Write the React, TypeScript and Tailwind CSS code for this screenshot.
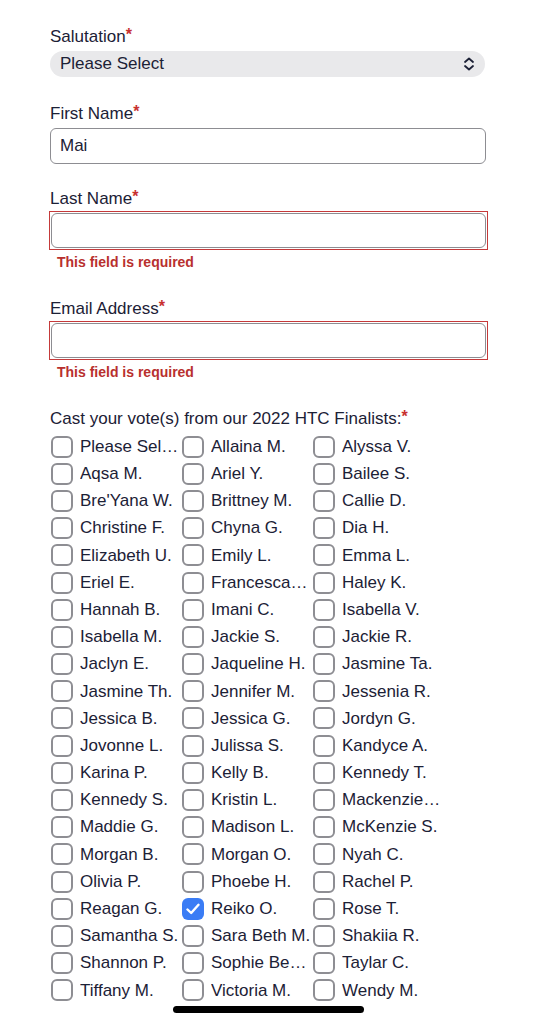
import React from 'react'

const names = [
  'Please Select', 'Allaina M.', 'Alyssa V.',
  'Aqsa M.', 'Ariel Y.', 'Bailee S.',
  "Bre'Yana W.", 'Brittney M.', 'Callie D.',
  'Christine F.', 'Chyna G.', 'Dia H.',
  'Elizabeth U.', 'Emily L.', 'Emma L.',
  'Eriel E.', 'Francesca M.', 'Haley K.',
  'Hannah B.', 'Imani C.', 'Isabella V.',
  'Isabella M.', 'Jackie S.', 'Jackie R.',
  'Jaclyn E.', 'Jaqueline H.', 'Jasmine Ta.',
  'Jasmine Th.', 'Jennifer M.', 'Jessenia R.',
  'Jessica B.', 'Jessica G.', 'Jordyn G.',
  'Jovonne L.', 'Julissa S.', 'Kandyce A.',
  'Karina P.', 'Kelly B.', 'Kennedy T.',
  'Kennedy S.', 'Kristin L.', 'Mackenzie M.',
  'Maddie G.', 'Madison L.', 'McKenzie S.',
  'Morgan B.', 'Morgan O.', 'Nyah C.',
  'Olivia P.', 'Phoebe H.', 'Rachel P.',
  'Reagan G.', 'Reiko O.', 'Rose T.',
  'Samantha S.', 'Sara Beth M.', 'Shakiia R.',
  'Shannon P.', 'Sophie Bennett', 'Taylar C.',
  'Tiffany M.', 'Victoria M.', 'Wendy M.',
]

function Label({ text, className = '' }: { text: string; className?: string }) {
  return (
    <div className={`h-5 leading-5 text-[17px] text-[#1c2136] ${className}`}>
      {text}
      <span className="text-[#c8312f] text-[16px] font-bold relative -top-[2px]">*</span>
    </div>
  )
}

function ErrorInput() {
  return (
    <>
      <div className="mt-[2px] border border-[#c53a3a] p-px">
        <div className="h-[35px] rounded-[6px] border-[1.5px] border-[#8d8d92] bg-white" />
      </div>
      <div className="mt-[4px] pl-2 h-4 leading-4 text-[14px] font-bold text-[#b8302e]">
        This field is required
      </div>
    </>
  )
}

function Checkbox({ checked }: { checked: boolean }) {
  if (checked) {
    return (
      <div className="w-[22px] h-[22px] rounded-[6px] bg-[#3a7cf5] flex items-center justify-center shrink-0">
        <svg width="14" height="12" viewBox="0 0 14 12" fill="none">
          <path d="M1.5 6.5 L5.2 10 L12.5 1.8" stroke="white" strokeWidth="2.4" strokeLinecap="round" strokeLinejoin="round" />
        </svg>
      </div>
    )
  }
  return <div className="w-[22px] h-[22px] rounded-[6px] border-2 border-[#8e8e93] bg-white shrink-0" />
}

export default function App() {
  return (
    <div
      className="relative min-h-[1024px] bg-white pl-[50px] pr-[50px] pt-[27px]"
      style={{ fontFamily: '"Liberation Sans", Arial, sans-serif' }}
    >
      <Label text="Salutation" />
      <div className="mt-[4px] h-[26px] w-[435px] rounded-full bg-[#e9e9eb] flex items-center justify-between pl-[10px] pr-[10px]">
        <span className="text-[17px] text-[#1c2136]">Please Select</span>
        <svg width="12" height="14" viewBox="0 0 12 14" fill="none">
          <path d="M2 5 L6 1.5 L10 5" stroke="#1c2136" strokeWidth="1.8" strokeLinecap="round" strokeLinejoin="round" />
          <path d="M2 9 L6 12.5 L10 9" stroke="#1c2136" strokeWidth="1.8" strokeLinecap="round" strokeLinejoin="round" />
        </svg>
      </div>

      <Label text="First Name" className="mt-[27px]" />
      <div className="mt-[4px] h-[36px] w-[436px] rounded-[6px] border-[1.5px] border-[#8d8d92] flex items-center pl-[9px]">
        <span className="text-[17px] text-[#1c2136]">Mai</span>
      </div>

      <Label text="Last Name" className="mt-[25px]" />
      <div className="w-[439px] -ml-px">
        <ErrorInput />
      </div>

      <Label text="Email Address" className="mt-[29px]" />
      <div className="w-[439px] -ml-px">
        <ErrorInput />
      </div>

      <Label text="Cast your vote(s) from our 2022 HTC Finalists:" className="mt-[29px]" />
      <div className="mt-[4px] grid grid-cols-[131px_131px_131px]">
        {names.map((n) => (
          <div key={n} className="h-[27.2px] flex items-center gap-[7px] pl-px">
            <Checkbox checked={n === 'Reiko O.'} />
            <span className="text-[17px] text-[#1c2136] whitespace-nowrap overflow-hidden text-ellipsis max-w-[101px]">
              {n}
            </span>
          </div>
        ))}
      </div>

      <div className="absolute left-[173px] top-[1006px] w-[191px] h-[7px] rounded-full bg-black" />
    </div>
  )
}
